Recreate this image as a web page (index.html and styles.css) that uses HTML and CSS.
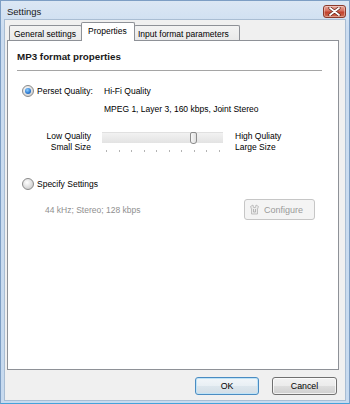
FILE: index.html
```html
<!DOCTYPE html>
<html>
<head>
<meta charset="utf-8">
<link rel="stylesheet" href="styles.css">
</head>
<body>
<div class="window">
  <div class="titlebar">
    <span class="title">Settings</span>
    <span class="close">
      <svg width="13" height="9" viewBox="0 0 13 9"><path d="M2 1 L11 8 M11 1 L2 8" stroke="#5a2118" stroke-width="3.2" stroke-linecap="round"/><path d="M2 1 L11 8 M11 1 L2 8" stroke="#ffffff" stroke-width="1.8" stroke-linecap="round"/></svg>
    </span>
  </div>
  <div class="client">
    <div class="tabs">
      <div class="tab">General settings</div>
      <div class="tab active">Properties</div>
      <div class="tab">Input format parameters</div>
    </div>
    <div class="panel">
      <div class="heading">MP3 format properties</div>
      <div class="sep"></div>
      <div class="row opt1">
        <span class="radio checked"></span>
        <span class="optlabel">Perset Quality:</span>
        <span>Hi-Fi Quality</span>
      </div>
      <div class="row desc">MPEG 1, Layer 3, 160 kbps, Joint Stereo</div>
      <div class="sliderrow">
        <div class="lab left">Low Quality<br>Small Size</div>
        <div class="slider">
          <div class="track"></div>
          <div class="thumb"></div>
          <div class="ticks">
            <i></i><i></i><i></i><i></i><i></i><i></i><i></i><i></i><i></i><i></i>
          </div>
        </div>
        <div class="lab right">High Quliaty<br>Large Size</div>
      </div>
      <div class="row opt2">
        <span class="radio"></span>
        <span class="optlabel">Specify Settings</span>
      </div>
      <div class="row custom">
        <span class="disabled">44 kHz; Stereo; 128 kbps</span>
        <span class="cfg">
          <svg width="11" height="11" viewBox="0 0 11 11"><path d="M1.5 2.5 L4 1 L4.5 3.5 L6.5 3.5 L7 1 L9.5 2.5 L8.5 5 L8.5 10 L2.5 10 L2.5 5 Z" fill="#ececec" stroke="#b4b4b4" stroke-width="0.8"/><path d="M4.5 5 L4.5 8 L6.5 8 L6.5 5" fill="none" stroke="#a8a8a8" stroke-width="0.8"/></svg>
          Configure
        </span>
      </div>
    </div>
    <div class="buttons">
      <div class="btn default">OK</div>
      <div class="btn">Cancel</div>
    </div>
  </div>
</div>
</body>
</html>
```

FILE: styles.css
```css
html, body {
  margin: 0;
  padding: 0;
  background: #cddff2;
}
body {
  width: 350px;
  height: 404px;
  overflow: hidden;
  font-family: "Liberation Sans", Arial, sans-serif;
  font-size: 8.5px;
  color: #000;
}
.window {
  width: 350px;
  height: 404px;
  box-sizing: border-box;
  border: 1px solid #7d9ec4;
  border-bottom-color: #45a2da;
  background: linear-gradient(#dbe7f4, #cbdcf0 30px, #c7daef);
  display: flex;
  flex-direction: column;
}
.titlebar {
  height: 18px;
  flex: none;
  display: flex;
  align-items: center;
  justify-content: space-between;
  padding: 0 3px 0 6px;
}
.title {
  font-size: 9.5px;
  color: #1a1a1a;
  margin-top: 2px;
}
.close {
  width: 21px;
  height: 11px;
  margin-top: 3px;
  border: 1px solid #8b3a2c;
  border-radius: 3px;
  background: linear-gradient(#e9a79a, #d6705f 45%, #c1412d 55%, #cf6a4f);
  display: flex;
  align-items: center;
  justify-content: center;
  box-shadow: inset 0 0 0 1px rgba(255,255,255,0.35);
}
.client {
  flex: 1;
  margin: 0 3px 2px 3px;
  border: 1px solid #a9bdd3;
  background: #f0f0f0;
  padding: 2px 6px 5px 2px;
  display: flex;
  flex-direction: column;
}
.tabs {
  height: 18px;
  display: flex;
  align-items: flex-end;
  padding-left: 2px;
  position: relative;
  z-index: 1;
}
.tab {
  height: 15px;
  box-sizing: border-box;
  border: 1px solid #8e9197;
  border-bottom: none;
  background: linear-gradient(#f3f3f3, #e9e9e9);
  padding: 0 3px;
  line-height: 17px;
  margin-right: -1px;
  border-radius: 2px 2px 0 0;
}
.tab:nth-child(1) { width: 73px; padding-left: 4px; }
.tab:nth-child(3) { width: 106px; }
.tab.active {
  height: 19px;
  margin-bottom: -1px;
  background: #fff;
  width: 54px;
  padding-left: 6px;
  line-height: 16px;
}
.panel {
  height: 330px;
  box-sizing: border-box;
  border: 1px solid #8e9197;
  background: #fff;
  padding: 10px 16px 0 9px;
}
.heading {
  font-weight: bold;
  font-size: 9.8px;
  line-height: 12px;
  color: #1a1a1a;
}
.sep {
  height: 1px;
  background: #a5a5a5;
  margin-top: 7px;
}
.row {
  display: flex;
  align-items: center;
  height: 12px;
  line-height: 12px;
}
.opt1 { margin-top: 14px; }
.radio {
  width: 12px;
  height: 12px;
  box-sizing: border-box;
  border-radius: 50%;
  border: 1px solid #8a8a8a;
  background: radial-gradient(circle at 40% 35%, #ffffff, #d4d4d4 70%, #c4c4c4);
  margin-left: 5px;
  margin-right: 3px;
  flex: none;
  display: flex;
  align-items: center;
  justify-content: center;
}
.radio.checked::after {
  content: "";
  width: 6px;
  height: 6px;
  border-radius: 50%;
  background: radial-gradient(circle at 40% 35%, #8fd0ff, #2a78d0 60%, #1a4f9a);
}
.optlabel { width: 67px; }
.desc { margin-top: 6px; padding-left: 87px; }
.sliderrow {
  display: flex;
  margin-top: 16px;
  height: 22px;
}
.lab {
  line-height: 11px;
}
.lab.left {
  width: 74px;
  text-align: right;
}
.lab.right {
  margin-left: 12px;
}
.slider {
  width: 121px;
  margin-left: 11px;
  position: relative;
}
.track {
  height: 10px;
  margin-top: 1px;
  background: linear-gradient(#f2f2f2, #e3e3e3);
  border-top: 1px solid #e0e0e0;
}
.thumb {
  position: absolute;
  left: 88px;
  top: 1px;
  width: 7px;
  height: 12px;
  box-sizing: border-box;
  border: 1px solid #8c8c8c;
  border-radius: 2px 2px 3px 3px;
  background: linear-gradient(90deg, #f7f7f7, #e0e0e0);
}
.ticks {
  display: flex;
  justify-content: space-between;
  padding: 0 3px 0 4px;
  margin-top: 7px;
}
.ticks i {
  width: 1px;
  height: 2px;
  background: #b4b4b4;
}
.opt2 { margin-top: 25px; }
.custom {
  margin-top: 9px;
  height: 21px;
}
.disabled {
  color: #8f8f8f;
  margin-left: 28px;
}
.cfg {
  margin-left: auto;
  margin-right: 7px;
  width: 71px;
  height: 21px;
  box-sizing: border-box;
  border: 1px solid #c6c6c6;
  border-radius: 3px;
  background: #f4f4f4;
  color: #9a9a9a;
  display: flex;
  align-items: center;
  gap: 4px;
  padding-left: 4px;
  font-size: 9px;
}
.buttons {
  display: flex;
  justify-content: flex-end;
  gap: 13px;
  margin-top: 7px;
  margin-right: 2px;
}
.btn {
  width: 64px;
  height: 18px;
  box-sizing: border-box;
  border: 1px solid #707070;
  border-radius: 3px;
  background: linear-gradient(#f2f2f2, #ebebeb 50%, #dddddd 51%, #cfcfcf);
  text-align: center;
  line-height: 16px;
  font-size: 8.8px;
  box-shadow: inset 0 0 0 1px rgba(255,255,255,0.7);
}
.btn.default {
  border-color: #4a8cc2;
  box-shadow: inset 0 0 0 1px #bfe3f7;
  background: linear-gradient(#f2f6f9, #e8eff4 50%, #dce6ed 51%, #d3dee6);
}
.btn:nth-child(2) { width: 65px; }
```
